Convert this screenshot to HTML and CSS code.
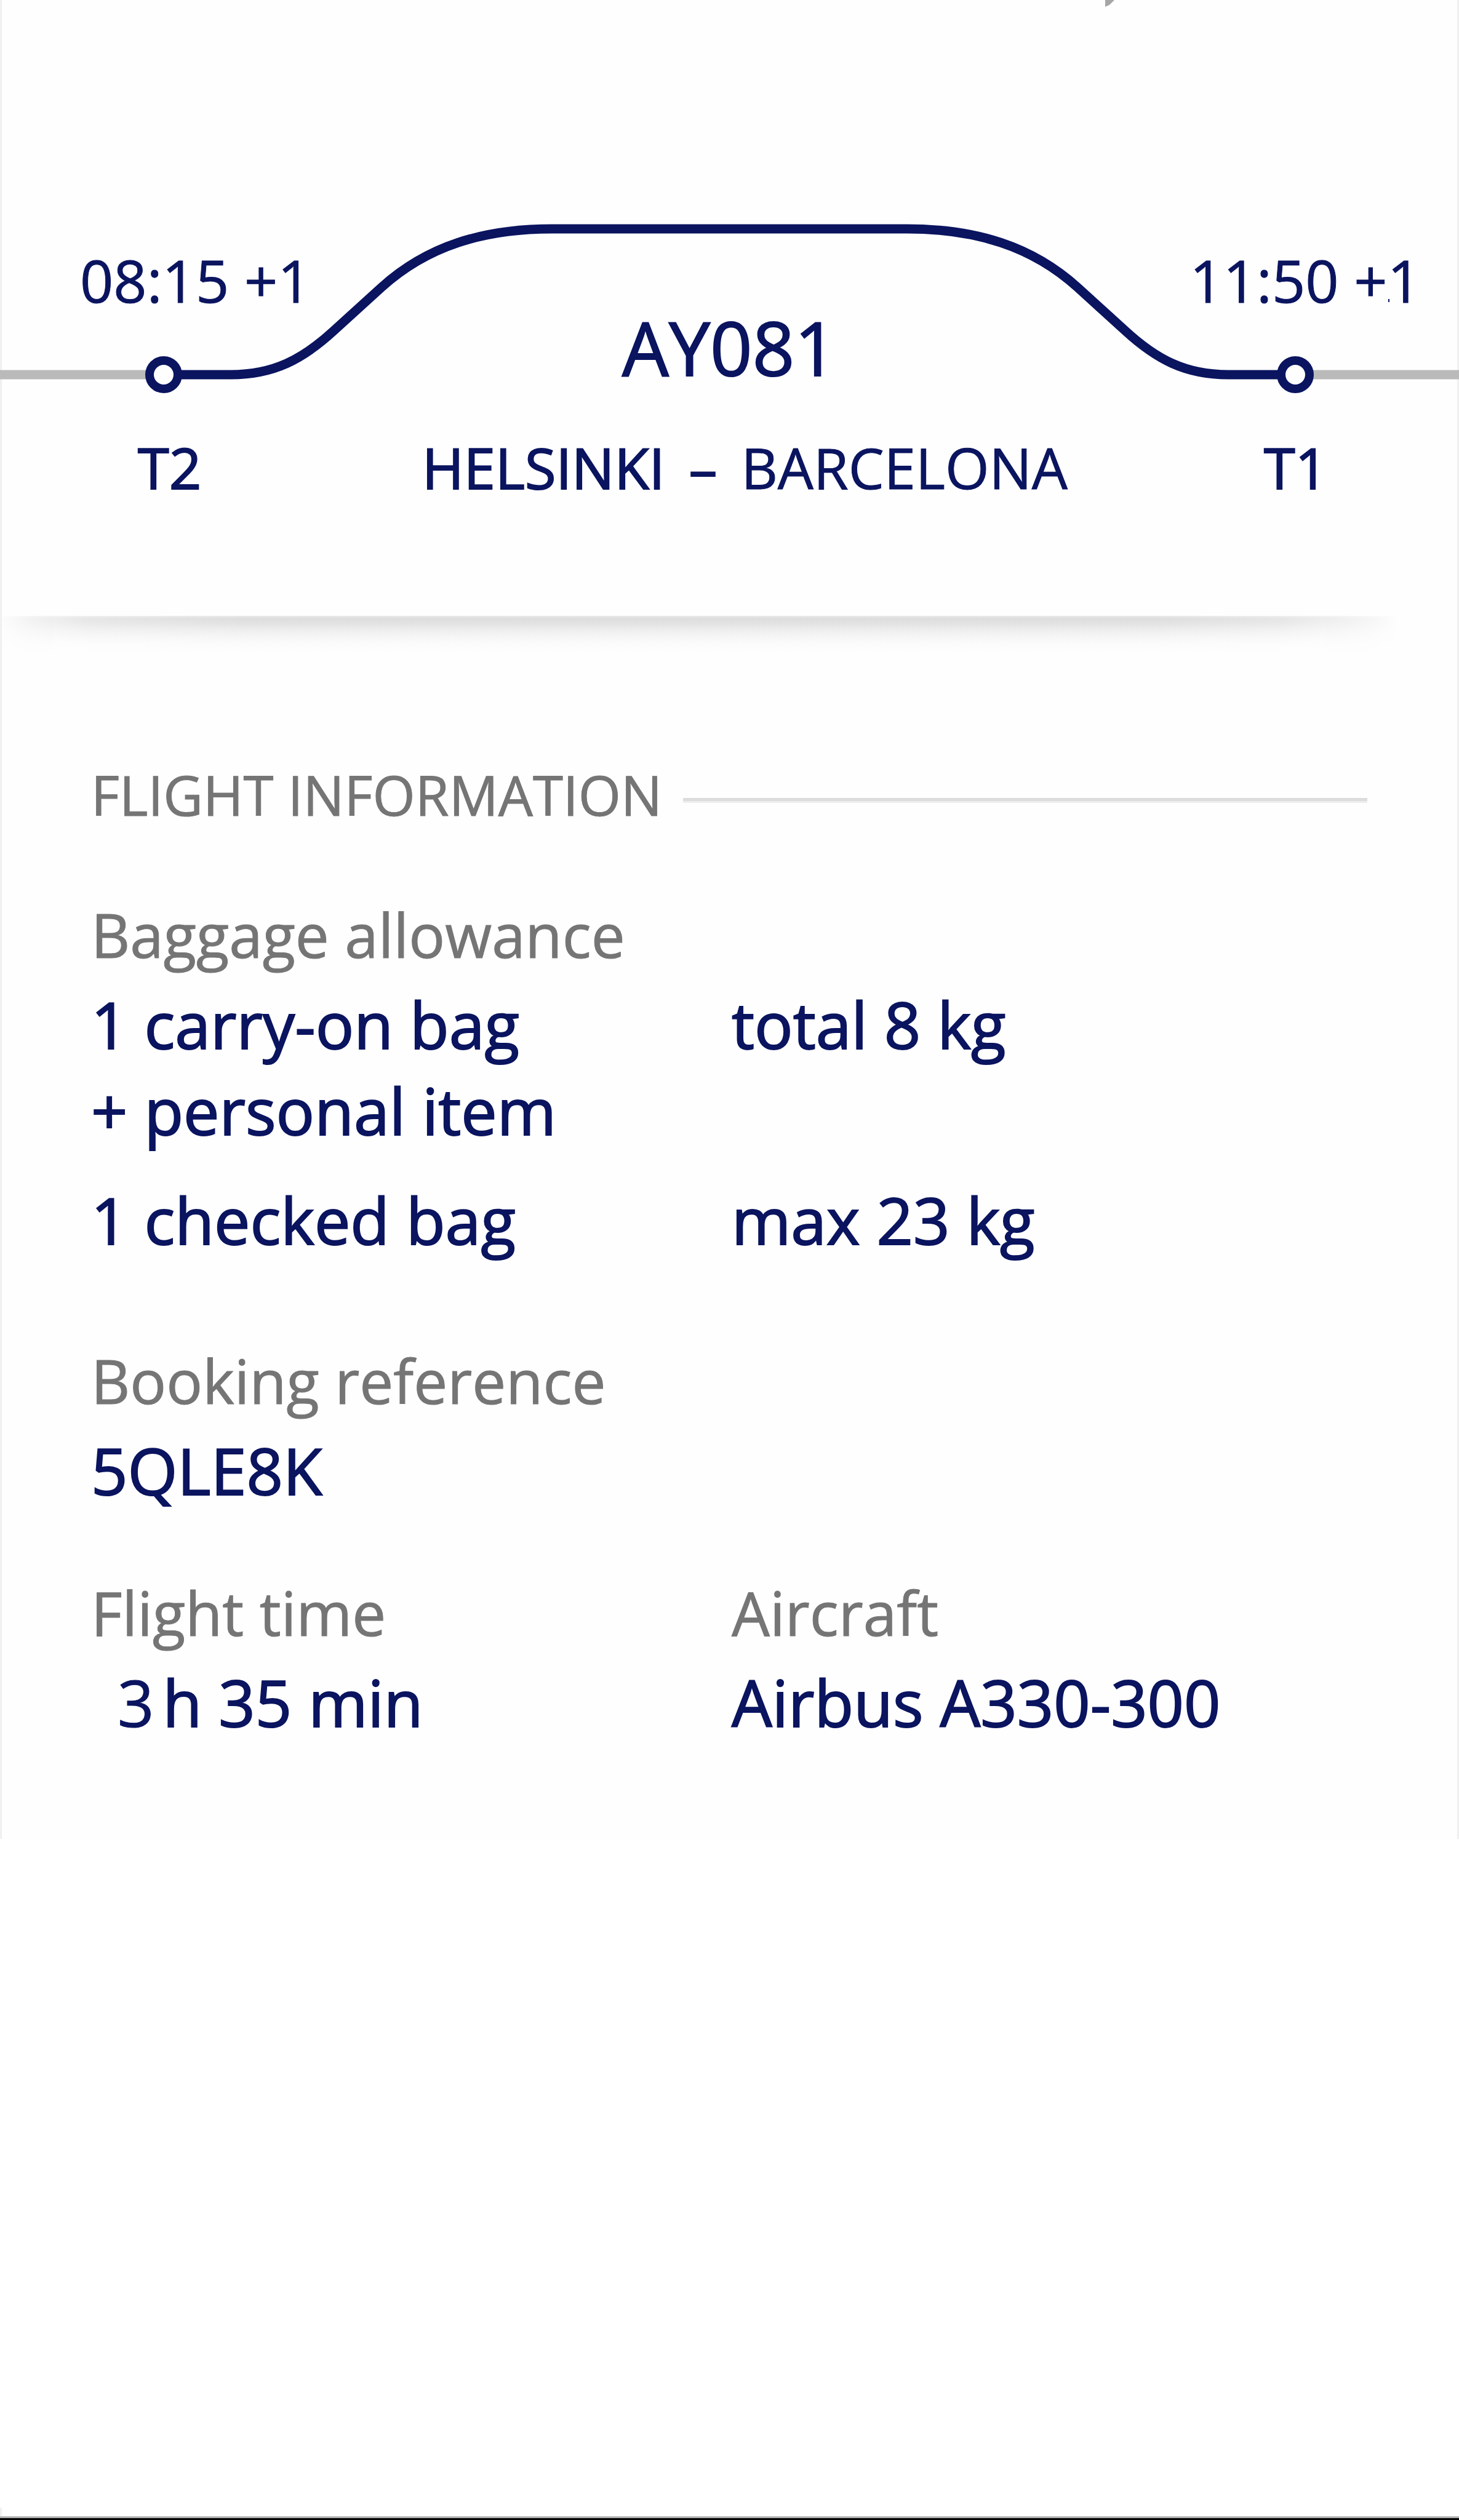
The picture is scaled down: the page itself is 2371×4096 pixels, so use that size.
FILE: index.html
```html
<!DOCTYPE html>
<html lang="en">
<head>
<meta charset="utf-8">
<title>Flight AY081</title>
<link rel="stylesheet" href="styles.css">
</head>
<body>
<main class="card">
  <section class="journey">
    <svg class="route-line" viewBox="0 0 2371 1001" aria-hidden="true">
      <path d="M1796 0H1811L1803 8L1796 11Z" fill="#a6a6a6"/>
      <path d="M0 609H266M2105 609H2371" stroke="#bababa" stroke-width="15"/>
      <path d="M266 609H375C445 609 492 584 543 537L620 467C694 400 785 372 897 372H1474C1586 372 1677 400 1751 467L1828 537C1879 584 1926 609 1996 609H2105" fill="none" stroke="#0a145f" stroke-width="15"/>
      <circle cx="266" cy="609" r="23" fill="#fefefe" stroke="#0a145f" stroke-width="14"/>
      <circle cx="2105" cy="609" r="23" fill="#fefefe" stroke="#0a145f" stroke-width="14"/>
      <path d="M2256 486h2v5h-2z" fill="#0a145f"/>
    </svg>
    <div class="journey-text">
      <div class="times">
        <time>08:15 +1</time>
        <time>11:50 +1</time>
      </div>
      <h1 class="flight-number">AY081</h1>
      <div class="stations">
        <span class="terminal">T2</span>
        <div class="cities"><span>HELSINKI</span><span>–</span><span class="light">BARCELONA</span></div>
        <span>T1</span>
      </div>
    </div>
  </section>
  <div class="shade"></div>
  <section class="info">
    <h2 class="info-title">FLIGHT INFORMATION</h2>
    <dl class="group">
      <dt>Baggage allowance</dt>
      <dd class="row"><span>1 carry-on bag<br>+ personal item</span><span>total 8 kg</span></dd>
      <dd class="row next"><span>1 checked bag</span><span>max 23 kg</span></dd>
    </dl>
    <dl class="group booking">
      <dt>Booking reference</dt>
      <dd>5QLE8K</dd>
    </dl>
    <div class="row details">
      <dl class="group">
        <dt>Flight time</dt>
        <dd class="duration"><span class="light">3</span><span>h 35 min</span></dd>
      </dl>
      <dl class="group">
        <dt>Aircraft</dt>
        <dd>Airbus A330-300</dd>
      </dl>
    </div>
  </section>
</main>
<footer class="page-end"></footer>
</body>
</html>
```
FILE: styles.css
```css
* { box-sizing: border-box; margin: 0; padding: 0; }

body {
  min-height: 100vh;
  display: flex;
  flex-direction: column;
  background: #fff;
  color: #0a145f;
  font-family: "Open Sans", "Noto Sans", sans-serif;
  font-weight: 400;
}

.card {
  background: #fefefe;
  box-shadow: inset 3px 0 #f0f0f0, inset -3px 0 #f0f0f0;
}

.journey { display: grid; }
.route-line, .journey-text { grid-area: 1 / 1; }
.route-line { display: block; width: 100%; }
.journey-text { padding-top: 405px; }

.times {
  display: flex;
  justify-content: space-between;
  padding: 0 62px 0 130px;
  font-size: 95px;
  line-height: 100px;
  -webkit-text-stroke: 1px currentColor;
}

.flight-number {
  font-size: 120px;
  font-weight: 400;
  line-height: 120px;
  text-align: center;
  -webkit-text-stroke: 2px currentColor;
}

.stations {
  display: grid;
  grid-template-columns: 686px 1fr 317px;
  margin-top: 85px;
  font-size: 92px;
  line-height: 100px;
  -webkit-text-stroke: 2px currentColor;
}
.terminal { padding-left: 224px; }
.cities { display: flex; gap: 39px; }
.light { -webkit-text-stroke: 1px currentColor; }

.shade {
  height: 60px;
  margin: 0 3px;
  background: linear-gradient(#e6e6e6 3px, #dcdcdc 3px, #e3e3e3 13px, #ececec 21px, #f2f2f2 29px, #f7f7f7 36px, #fbfbfb 44px, #fefefe 60px);
  -webkit-mask-image: linear-gradient(90deg, rgba(0,0,0,.05), rgba(0,0,0,.35) 2%, rgba(0,0,0,.75) 6%, #000 17%, #000 79%, rgba(0,0,0,.75) 88%, rgba(0,0,0,.25) 94%, transparent 96%);
  mask-image: linear-gradient(90deg, rgba(0,0,0,.05), rgba(0,0,0,.35) 2%, rgba(0,0,0,.75) 6%, #000 17%, #000 79%, rgba(0,0,0,.75) 88%, rgba(0,0,0,.25) 94%, transparent 96%);
}

.info { padding: 181px 149px 152px 148px; }

.info-title {
  display: flex;
  align-items: center;
  gap: 34px;
  margin-bottom: 112px;
  color: #757575;
  font-size: 89px;
  font-weight: 400;
  line-height: 100px;
  -webkit-text-stroke: 1px currentColor;
}
.info-title::after {
  content: "";
  flex: 1;
  height: 8px;
  margin-top: 18px;
  background: linear-gradient(#dcdcdc 5px, #eee 5px);
}

.group dt {
  margin-bottom: 11px;
  color: #757575;
  font-size: 98px;
  line-height: 130px;
  -webkit-text-stroke: 1px currentColor;
}
.group dd {
  font-size: 104px;
  line-height: 140px;
  -webkit-text-stroke: 2px currentColor;
}
.row {
  display: grid;
  grid-template-columns: 1fr 1fr;
  column-gap: 8px;
}
.next { margin-top: 38px; }
.booking { margin-top: 126px; }
.details { margin-top: 96px; }
.duration { display: flex; gap: 14px; padding-left: 43px; }

.page-end {
  height: 20px;
  margin-top: auto;
  border-bottom: 3px solid #000;
  background:
    linear-gradient(#b0b0b0, #b0b0b0) bottom / 100% 3px no-repeat,
    linear-gradient(#f0f0f0, #f0f0f0) left / 3px 100% no-repeat;
}
```
